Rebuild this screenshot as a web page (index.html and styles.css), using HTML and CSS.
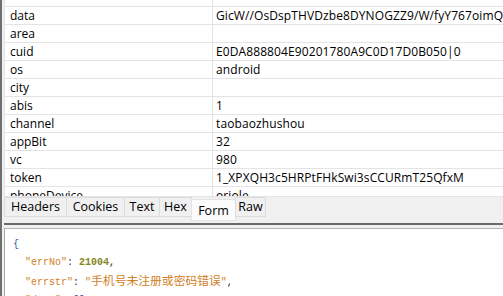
FILE: index.html
```html
<!DOCTYPE html>
<html>
<head>
<meta charset="utf-8">
<link rel="stylesheet" href="styles.css">
</head>
<body>
<div class="app">
  <div class="grid">
    <div class="row first"><div class="k"></div><div class="v"></div></div>
    <div class="row"><div class="k">data</div><div class="v">GicW//OsDspTHVDzbe8DYNOGZZ9/W/fyY767oimQx2kB8Lw</div></div>
    <div class="row"><div class="k">area</div><div class="v"></div></div>
    <div class="row"><div class="k">cuid</div><div class="v">E0DA888804E90201780A9C0D17D0B050|0</div></div>
    <div class="row"><div class="k">os</div><div class="v">android</div></div>
    <div class="row"><div class="k">city</div><div class="v"></div></div>
    <div class="row"><div class="k">abis</div><div class="v">1</div></div>
    <div class="row"><div class="k">channel</div><div class="v">taobaozhushou</div></div>
    <div class="row"><div class="k">appBit</div><div class="v">32</div></div>
    <div class="row"><div class="k">vc</div><div class="v">980</div></div>
    <div class="row"><div class="k">token</div><div class="v">1_XPXQH3c5HRPtFHkSwi3sCCURmT25QfxM</div></div>
    <div class="row"><div class="k">phoneDevice</div><div class="v">oriole</div></div>
  </div>
  <div class="tabbar">
    <div class="tab tab-headers">Headers</div>
    <div class="tab tab-cookies">Cookies</div>
    <div class="tab tab-text">Text</div>
    <div class="tab tab-hex">Hex</div>
    <div class="tab tab-form active">Form</div>
    <div class="tab tab-raw">Raw</div>
  </div>
  <div class="sep"></div>
  <div class="panel">
<pre class="json"><span class="br">{</span>
  <span class="key">"errNo"</span><span class="pn">: </span><span class="num">21004</span><span class="pn">,</span>
  <span class="key">"errstr"</span><span class="pn">: </span><span class="str">"<span class="cjk">手机号未注册或密码错误</span>"</span><span class="pn">,</span>
  <span class="key">"data"</span><span class="pn">: </span><span class="br">[]</span></pre>
  </div>
</div>
</body>
</html>
```

FILE: styles.css
```css
html, body {
  margin: 0;
  padding: 0;
}
body {
  width: 503px;
  height: 296px;
  overflow: hidden;
  background: #f0f0f0;
  font-family: "Open Sans", "Noto Sans", "Noto Sans CJK SC", sans-serif;
  font-size: 12px;
  color: #000;
}
.app {
  height: 296px;
  border-left: 2px solid #6f6f6f;
  padding-left: 2px;
  display: flex;
  flex-direction: column;
}
.grid {
  flex: none;
  height: 196px;
  overflow: hidden;
  background: #fff;
  border-left: 1px solid #e4e4e4;
}
.row {
  display: flex;
  height: 17px;
  line-height: 17px;
  border-bottom: 1px solid #e4e4e4;
  white-space: nowrap;
}
.row.first {
  height: 6px;
}
.k {
  flex: none;
  width: 202px;
  padding-left: 5px;
  border-right: 1px solid #e4e4e4;
}
.v {
  flex: 1;
  min-width: 0;
  overflow: hidden;
  padding-left: 3px;
  letter-spacing: 0.1px;
}
.tabbar {
  flex: none;
  height: 27px;
  box-sizing: border-box;
  border-top: 1px solid #e4e4e4;
  display: flex;
  align-items: flex-start;
  font-size: 12.5px;
}
.tab {
  flex: none;
  height: 20px;
  box-sizing: border-box;
  line-height: 18px;
  text-align: center;
  white-space: nowrap;
  border: 1px solid #dcdcdc;
  background: #f0f0f0;
  margin-right: -1px;
}
.tab-headers { width: 63px; }
.tab-cookies { width: 59px; }
.tab-text { width: 36px; }
.tab-hex { width: 33px; }
.tab-form { width: 45px; }
.tab-raw { width: 31px; }
.tab.active {
  margin-top: 2px;
  height: 22px;
  line-height: 22px;
  background: #fbfbfb;
  border-color: #e4e4e4;
}
.sep {
  flex: none;
  height: 3px;
  border-top: 2px solid #6a6a6a;
}
.panel {
  flex: 1;
  background: #fff;
  border-top: 1px solid #b4b4b4;
  border-left: 1px solid #a8a8a8;
  padding: 7px 0 0 8px;
}
.json {
  margin: 0;
  font-family: "Liberation Mono", "Noto Sans CJK SC", monospace;
  font-size: 10px;
  line-height: 17.5px;
  color: #333;
}
.br { color: #2f5f9f; }
.key { color: #d0801e; }
.pn { color: #333; }
.num { color: #86861c; font-weight: bold; }
.str { color: #d0801e; }
.cjk { font-family: "Noto Sans CJK SC", sans-serif; font-size: 11.8px; }
```
